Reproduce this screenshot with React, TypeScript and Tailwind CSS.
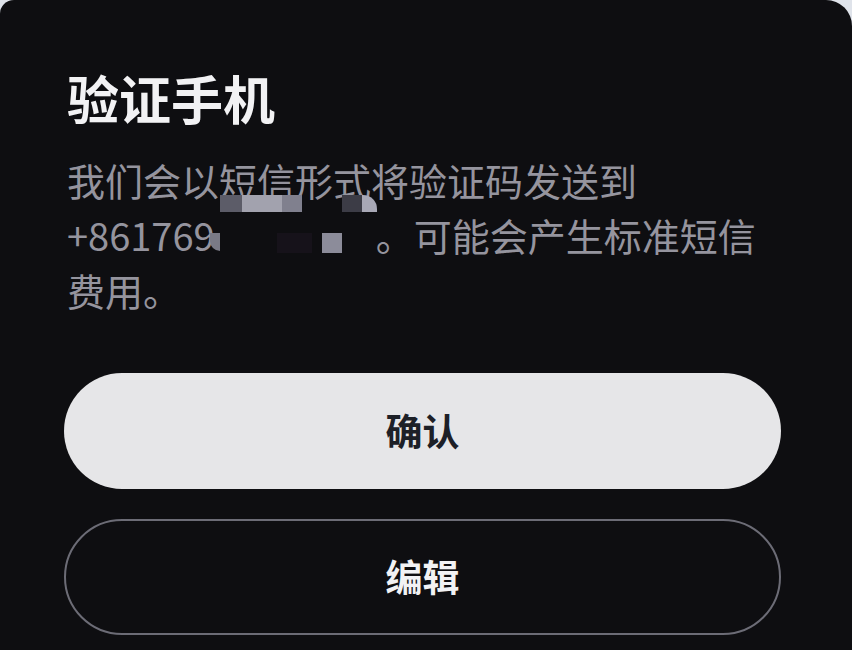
const font = { fontFamily: '"Noto Sans CJK SC", "Noto Sans", sans-serif' }

// pixelated mosaic that hides part of the phone number
const mosaic = [
  { cls: "top-[43px] left-[156px] w-[22px] h-[17px] bg-[#5c5c68]" },
  { cls: "top-[43px] left-[178px] w-[40px] h-[17px] bg-[#a2a2ae]" },
  { cls: "top-[43px] left-[218px] w-[20px] h-[17px] bg-[#80808e]" },
  { cls: "top-[43px] left-[278px] w-[20px] h-[17px] bg-[#3c3c46]" },
  { cls: "top-[43px] left-[298px] w-[15px] h-[17px] bg-[#a8a8b6] rounded-tr-[14px]" },
  { cls: "top-[81px] left-[146px] w-[10px] h-[18px] bg-[#7a7a86] rounded-bl-[10px]" },
  { cls: "top-[81px] left-[213px] w-[35px] h-[20px] bg-[#16121a]" },
  { cls: "top-[81px] left-[258px] w-[20px] h-[20px] bg-[#8c8c9a]" },
]

export default function App() {
  return (
    <div className="w-[852px] h-[650px] overflow-hidden bg-[#dfe3ea]" style={font}>
      <div className="h-full bg-[#0e0e11] rounded-tl-[14px] rounded-tr-[26px] pt-[67px] pl-[64px] pr-[71px]">
        <h1 className="pl-[3px] text-[52px] leading-[62px] font-bold text-[#f2f2f4]">验证手机</h1>

        <p className="relative mt-[23px] pl-[3px] text-[38px] leading-[55px] text-[#95949e]">
          我们会以短信形式将验证码发送到
          <br />
          +861769<span className="inline-block w-[161px] h-[1px]"></span>。可能会产生标准短信费用。
          {mosaic.map((m, i) => (
            <span key={i} className={"absolute " + m.cls}></span>
          ))}
        </p>

        <div className="mt-[56px] flex flex-col gap-[30px]">
          <button className="h-[116px] w-full rounded-full bg-[#e6e6e8] text-[37px] font-bold text-[#1d2027]">
            确认
          </button>
          <button className="h-[116px] w-full rounded-full border-2 border-[#6c6c76] bg-transparent text-[37px] font-bold text-[#f2f2f4]">
            编辑
          </button>
        </div>
      </div>
    </div>
  )
}
